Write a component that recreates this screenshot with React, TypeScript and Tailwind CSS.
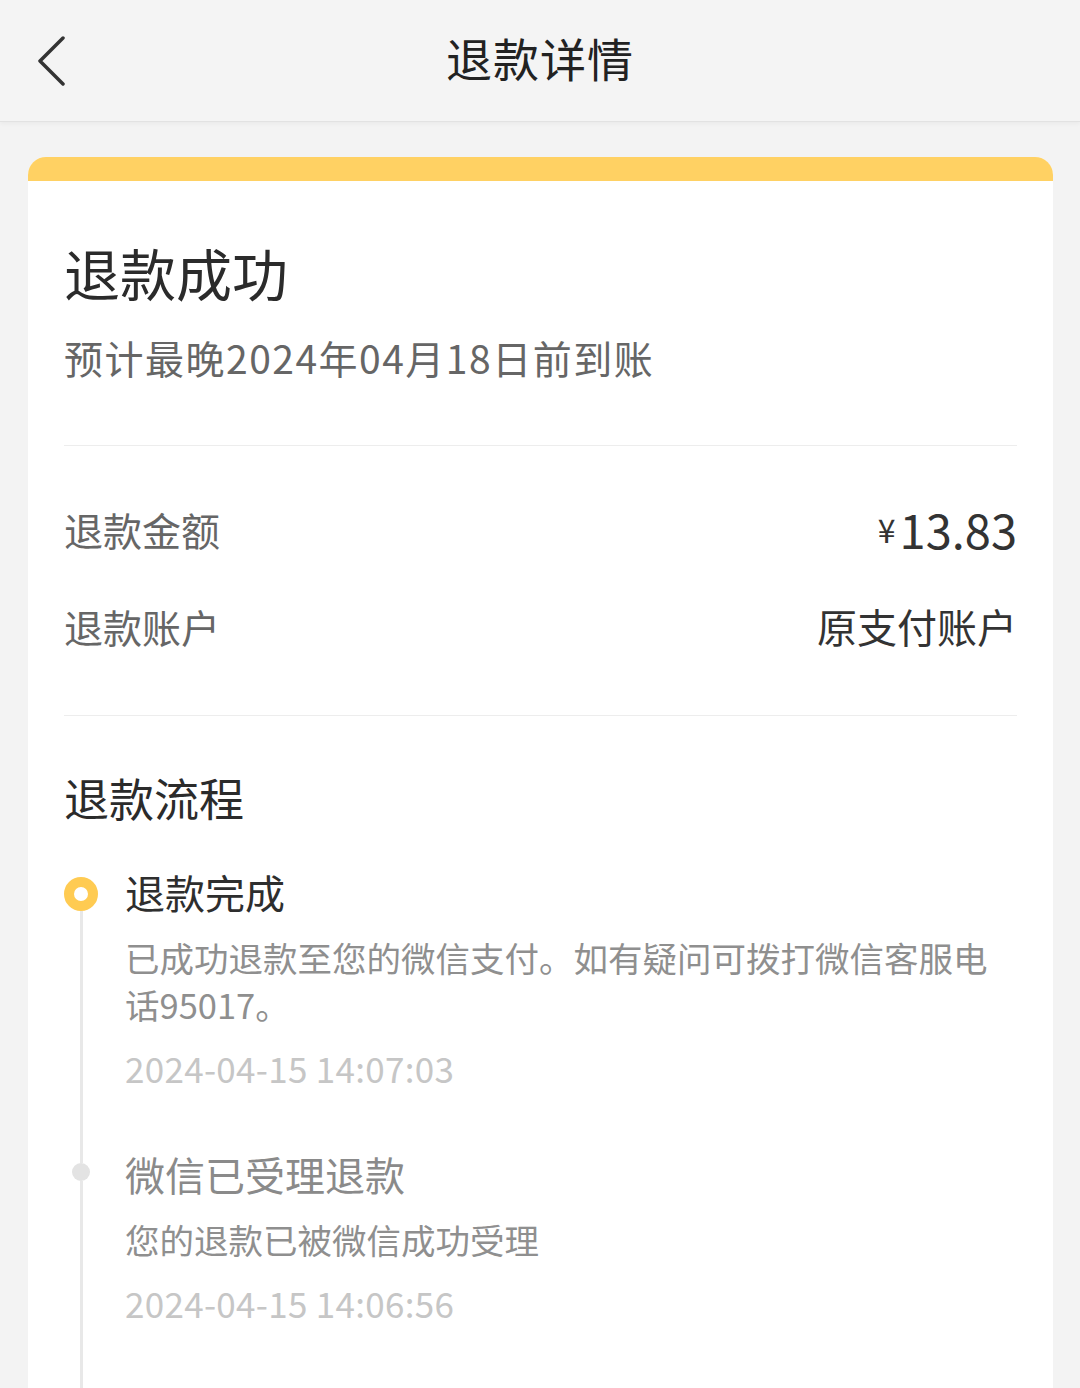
import React from 'react';

const BackIcon = () => (
  <svg width="30" height="50" viewBox="0 0 30 50" fill="none">
    <polyline points="27,2 4,25 27,48" stroke="#333" strokeWidth="3.5" strokeLinecap="round" strokeLinejoin="round" />
  </svg>
);

type Step = {
  title: string;
  desc: string;
  time: string;
  active?: boolean;
};

const steps: Step[] = [
  {
    title: '退款完成',
    desc: '已成功退款至您的微信支付。如有疑问可拨打微信客服电话95017。',
    time: '2024-04-15 14:07:03',
    active: true,
  },
  {
    title: '微信已受理退款',
    desc: '您的退款已被微信成功受理',
    time: '2024-04-15 14:06:56',
  },
];

const TimelineItem = ({ step, last }: { step: Step; last?: boolean }) => (
  <div className="flex">
    <div className="w-[34px] mr-[27px] flex flex-col items-center shrink-0">
      {step.active ? (
        <>
          <div className="h-[11px]" />
          <div className="w-[34px] h-[34px] rounded-full border-[10px] border-[#ffcb52] bg-white" />
        </>
      ) : (
        <>
          <div className="w-[3px] h-[15px] bg-[#e8e8e8]" />
          <div className="w-[18px] h-[18px] rounded-full bg-[#e3e3e3]" />
        </>
      )}
      <div className="w-[3px] flex-1 bg-[#e8e8e8]" />
    </div>
    <div className={`flex-1 ${last ? 'pb-[120px]' : 'pb-[57px]'}`}>
      <div
        className={`text-[40px] leading-[52px] ${step.active ? 'text-[#2e2e2e]' : 'text-[#8a8a8a]'}`}
      >
        {step.title}
      </div>
      <p className="mt-[16px] text-[34.5px] leading-[47px] text-[#8f8f8f]">{step.desc}</p>
      <div className="mt-[16px] text-[35px] leading-[47px] tracking-[0.3px] text-[#c6c6c6]">{step.time}</div>
    </div>
  </div>
);

const App = () => {
  return (
    <div className="min-h-[1388px] bg-[#f3f3f3] font-['Noto_Sans_CJK_SC','Noto_Sans',sans-serif]">
      <header className="h-[122px] grid grid-cols-[1fr_auto_1fr] items-center bg-[#f4f4f4] border-b border-[#e2e2e2] shadow-[0_2px_4px_rgba(0,0,0,0.04)]">
        <div className="pl-[36px] flex items-center">
          <BackIcon />
        </div>
        <h1 className="mb-[7px] text-[46px] leading-[60px] text-[#222] tracking-[1px]">退款详情</h1>
        <div />
      </header>

      <div className="pt-[35px] pl-[28px] pr-[27px]">
        <div className="rounded-t-[18px] overflow-hidden bg-white">
          <div className="h-[24px] bg-[#ffd163]" />
          <div className="px-[36px] pt-[55px]">
            <h2 className="text-[56px] leading-[72px] text-[#2b2b2b]">退款成功</h2>
            <p className="mt-[23px] text-[39px] leading-[52px] tracking-[1.5px] text-[#666]">
              预计最晚2024年04月18日前到账
            </p>

            <div className="mt-[62px] h-px bg-[#ededed]" />

            <div className="mt-[57px] h-[52px] flex items-center justify-between">
              <span className="text-[39px] leading-[52px] text-[#666]">退款金额</span>
              <span className="h-[52px] text-[#333] flex items-center">
                <span className="text-[32px] leading-[52px] mr-[4px]">¥</span>
                <span className="text-[47px] leading-[52px]">13.83</span>
              </span>
            </div>
            <div className="mt-[45px] h-[52px] flex items-center justify-between">
              <span className="text-[39px] leading-[52px] text-[#666]">退款账户</span>
              <span className="text-[40px] leading-[52px] text-[#333]">原支付账户</span>
            </div>

            <div className="mt-[63px] h-px bg-[#ededed]" />

            <h3 className="mt-[52px] text-[45px] leading-[60px] text-[#2b2b2b]">退款流程</h3>

            <div className="mt-[38px]">
              {steps.map((s, i) => (
                <TimelineItem key={s.time} step={s} last={i === steps.length - 1} />
              ))}
            </div>
          </div>
        </div>
      </div>
    </div>
  );
};

export default App;
